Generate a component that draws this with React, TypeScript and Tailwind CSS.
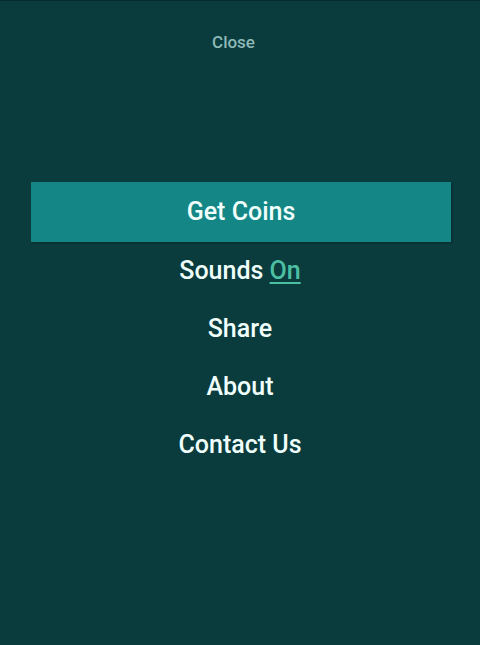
import React from "react";

export default function App() {
  return (
    <div
      className="w-[480px] h-[645px] bg-[#0a3b3d] border-t border-[#062c2e] flex flex-col items-center"
      style={{ fontFamily: "Roboto, 'Liberation Sans', sans-serif" }}
    >
      <div className="mt-[30px] h-[22px] leading-[22px] text-[17px] font-medium text-[#8db9b6] pr-[13px]">
        Close
      </div>
      <div className="mt-[129px] w-full flex flex-col items-center">
        <div className="ml-[2px] w-[420px] h-[60px] bg-[#138685] shadow-[1px_1px_2px_rgba(0,0,0,0.25)] flex items-center justify-center text-[25px] font-medium text-[#f0fffc]">
          Get Coins
        </div>
        {[
          <span>
            Sounds{" "}
            <span className="text-[#4cbfa2] underline underline-offset-[3px] decoration-[1.5px]">On</span>
          </span>,
          <span>Share</span>,
          <span>About</span>,
          <span>Contact Us</span>,
        ].map((c, i) => (
          <div
            key={i}
            className="h-[58px] flex items-center justify-center text-[25px] font-medium text-[#f0fffc]"
          >
            {c}
          </div>
        ))}
      </div>
    </div>
  );
}
